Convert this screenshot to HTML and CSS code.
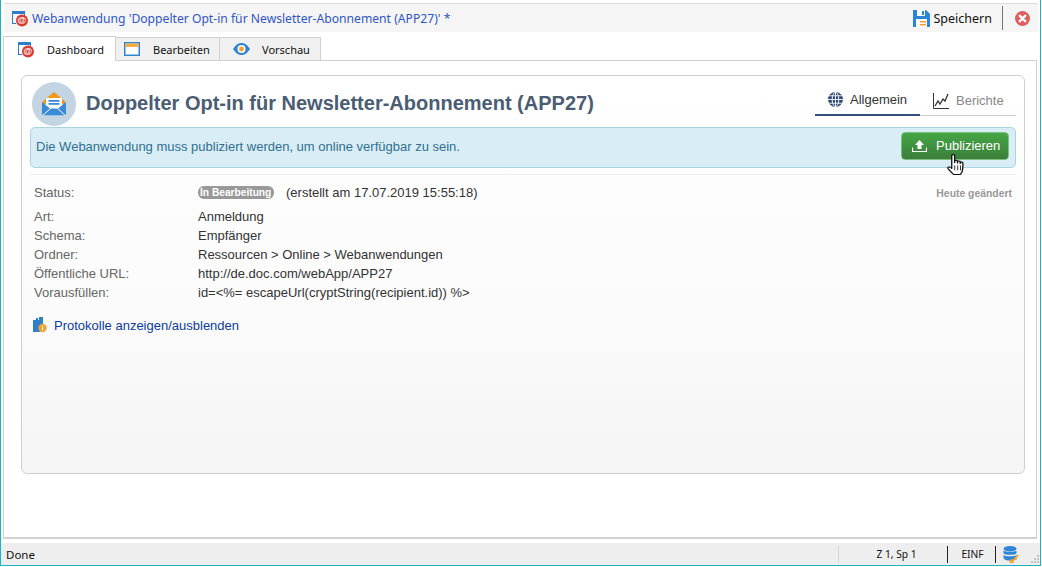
FILE: index.html
```html
<!DOCTYPE html>
<html lang="de">
<head>
<meta charset="utf-8">
<title>Webanwendung</title>
<link rel="stylesheet" href="styles.css">
</head>
<body>
<div class="app">
  <header class="titlebar">
    <svg class="ico-app" width="18" height="18" viewBox="0 0 18 18"><path d="M1 2h13v5h-1V5H2v9h3v1H1z" fill="#2f7fc8"/><rect x="1" y="2" width="13" height="2.6" fill="#2f7fc8"/><circle cx="11" cy="11.5" r="6" fill="#d93a32"/><text x="11" y="14.4" class="at">@</text></svg>
    <span class="title">Webanwendung 'Doppelter Opt-in für Newsletter-Abonnement (APP27)' *</span>
    <span class="grow"></span>
    <svg class="ico-save" width="17" height="17" viewBox="0 0 17 17"><path d="M0 0h13l4 4v13H0z" fill="#2b86d8"/><rect x="4" y="0" width="8" height="6" fill="#fff"/><rect x="9" y="1" width="2" height="4" fill="#2b86d8"/><rect x="3" y="9" width="11" height="8" fill="#fff"/><rect x="7" y="11" width="6" height="1.5" fill="#f0a030"/><rect x="7" y="14" width="6" height="1.5" fill="#f0a030"/></svg>
    <span class="save-label">Speichern</span>
    <span class="vsep"></span>
    <svg class="ico-close" width="15" height="15" viewBox="0 0 15 15"><circle cx="7.5" cy="7.5" r="7.5" fill="#de5f5f"/><path d="M4.8 4.8l5.4 5.4M10.2 4.8l-5.4 5.4" stroke="#fff" stroke-width="2.4" stroke-linecap="round"/></svg>
  </header>

  <nav class="tabs">
    <div class="tab tab-active">
      <svg width="18" height="18" viewBox="0 0 18 18"><path d="M1 2h13v5h-1V5H2v9h3v1H1z" fill="#2f7fc8"/><rect x="1" y="2" width="13" height="2.6" fill="#2f7fc8"/><circle cx="11" cy="11.5" r="6" fill="#d93a32"/><text x="11" y="14.4" class="at">@</text></svg>
      <span>Dashboard</span>
    </div>
    <div class="tab tab-edit">
      <svg width="16" height="14" viewBox="0 0 16 14"><rect x=".75" y=".75" width="14.5" height="12.5" fill="#fff" stroke="#2f86d0" stroke-width="1.5"/><rect x="1.5" y="1.5" width="13" height="3.4" fill="#f3ac3c"/></svg>
      <span>Bearbeiten</span>
    </div>
    <div class="tab tab-view">
      <svg width="17" height="12" viewBox="0 0 17 12"><path d="M0 6C3 1.500 5.500 0 8.500 0S14 1.500 17 6c-3 4.500-5.500 6-8.500 6S3 10.500 0 6z" fill="#2f86d0"/><circle cx="8.500" cy="6" r="4" fill="#fff"/><circle cx="8.500" cy="6" r="2.400" fill="#f0a030"/></svg>
      <span>Vorschau</span>
    </div>
  </nav>

  <main class="panel">
    <section class="card">
      <div class="head">
        <div class="avatar">
          <svg width="26" height="24" viewBox="0 0 26 24"><path d="M13 0L24 9v3H2V9z" fill="#f09a1a"/><rect x="5" y="6" width="16" height="10" fill="#fff"/><rect x="7.500" y="8" width="11" height="1.800" fill="#3a8ad6"/><rect x="7.500" y="11" width="11" height="1.800" fill="#3a8ad6"/><path d="M1 10l8 6.500h8L25 10v14H1z" fill="#3a8ad6"/><path d="M1 24l9-8h6l9 8z" fill="#3a8ad6" stroke="#fff" stroke-width="1"/></svg>
        </div>
        <h1>Doppelter Opt-in für Newsletter-Abonnement (APP27)</h1>
        <div class="views">
          <div class="view view-on">
            <svg width="15" height="15" viewBox="0 0 15 15"><circle cx="7.500" cy="7.500" r="7.500" fill="#2f4a70"/><g fill="none" stroke="#fff" stroke-width=".9"><ellipse cx="7.500" cy="7.500" rx="3.300" ry="7.200"/><path d="M7.500 0v15M0 7.500h15M1.300 3.800h12.400M1.300 11.200h12.400"/></g></svg>
            <span>Allgemein</span>
          </div>
          <div class="view view-off">
            <svg width="16" height="16" viewBox="0 0 16 16"><path d="M.5 0v15.500H16" fill="none" stroke="#333" stroke-width="1"/><path d="M2 13l3-5 2 3 3-5 2 2 3-7" fill="none" stroke="#333" stroke-width="1.300"/></svg>
            <span>Berichte</span>
          </div>
        </div>
      </div>

      <div class="banner">
        <span>Die Webanwendung muss publiziert werden, um online verfügbar zu sein.</span>
        <button class="publish" type="button">
          <svg width="15" height="12" viewBox="0 0 15 12"><path d="M7.500 0L12 5H9.500v4h-4V5H3z" fill="#fff"/><path d="M.5 7.500v4h14v-4" fill="none" stroke="#fff" stroke-width="1.200"/></svg>
          <span>Publizieren</span>
        </button>
      </div>

      <div class="details">
        <div class="changed">Heute geändert</div>
        <div class="status-row">
          <span class="label">Status:</span>
          <span class="status-val"><span class="badge">In Bearbeitung</span><span>(erstellt am 17.07.2019 15:55:18)</span></span>
        </div>
        <dl class="rows">
          <dt>Art:</dt><dd>Anmeldung</dd>
          <dt>Schema:</dt><dd>Empfänger</dd>
          <dt>Ordner:</dt><dd>Ressourcen &gt; Online &gt; Webanwendungen</dd>
          <dt>Öffentliche URL:</dt><dd>http://de.doc.com/webApp/APP27</dd>
          <dt>Vorausfüllen:</dt><dd>id=&lt;%= escapeUrl(cryptString(recipient.id)) %&gt;</dd>
        </dl>
        <div class="logs">
          <svg width="14" height="16" viewBox="0 0 14 16"><path d="M0 3h3V1h2v2h1V0h4v8a5 5 0 0 0-3 7H0z" fill="#2f7fc8"/><circle cx="9.500" cy="11" r="4.200" fill="#f0a030"/><rect x="9" y="8.500" width="1.100" height="1.200" fill="#fff"/><rect x="9" y="10.300" width="1.100" height="3" fill="#fff"/></svg>
          <a href="#">Protokolle anzeigen/ausblenden</a>
        </div>
      </div>
    </section>
  </main>

  <footer class="statusbar">
    <span class="done">Done</span>
    <span class="grow"></span>
    <span class="cell cell-pos">Z 1, Sp 1</span>
    <span class="cell cell-ins">EINF</span>
    <span class="cell cell-db">
      <svg width="16" height="17" viewBox="0 0 16 17"><ellipse cx="7" cy="2.800" rx="6.500" ry="2.800" fill="#2f86d8"/><path d="M.5 4.500c1 1.800 12 1.800 13 0v3c-1 1.800-12 1.800-13 0zM.5 9c1 1.800 12 1.800 13 0v3c-1 2-3 2.500-6.500 2.500S1.500 14 .5 12z" fill="#2f86d8"/><path d="M15 9l-5 5.500M9.500 14.500a1.300 1.300 0 1 0 .1.100M12 12l1.500 1.500" fill="none" stroke="#f0a030" stroke-width="1.800"/></svg>
    </span>
    <svg class="grip" width="9" height="9" viewBox="0 0 9 9"><path d="M6 0h2v2H6zM3 3h2v2H3zM6 3h2v2H6zM0 6h2v2H0zM3 6h2v2H3zM6 6h2v2H6z" fill="#c4c4c4"/></svg>
  </footer>

  <svg class="cursor" width="19" height="22" viewBox="1 0 16 23" preserveAspectRatio="none"><path d="M5 1.500c0-1.300 2.400-1.300 2.400 0V9l.2-1.500c0-1.200 2.200-1.200 2.200 0V9.500l.2-1.300c0-1.100 2.100-1.100 2.100 0v1.800l.2-.8c.2-1 2.100-.9 2.100.2 0 3-.1 6-.4 8-.3 2-1.200 3.100-1.800 4.100H6.500c-1-1.500-3-3.500-4.700-6.300-.7-1.300.8-2.400 1.900-1.300L5 15z" fill="#fff" stroke="#111" stroke-width="1.100" stroke-linejoin="round"/><path d="M7.500 12v5M10 12v5M12.400 12v5" stroke="#111" stroke-width=".8"/></svg>
</div>
</body>
</html>
```
FILE: styles.css
```css
* { box-sizing: border-box; }
html, body { margin: 0; padding: 0; background: #fff; }
body { width: 1042px; height: 567px; overflow: hidden; font-family: "Liberation Sans", Arial, sans-serif; font-size: 13px; color: #333; }
.app { position: relative; width: 1041px; height: 566px; border-left: 1px solid #19b5c4; border-right: 1px solid #19b5c4; border-bottom: 1px solid #19b5c4; padding-top: 3px; display: flex; flex-direction: column; }
.grow { flex: 1; }

.titlebar { height: 29px; margin: 0 2px 0 3px; border-top: 1px solid #dcdcdc; background: #f5f5f5; display: flex; align-items: center; padding-left: 7px; flex: none; }
.title { font-family: "Noto Sans", sans-serif; font-size: 12.15px; color: #2f55c8; margin-left: 3px; white-space: nowrap; }
.at { font-family: "Liberation Sans", sans-serif; font-size: 9px; font-weight: bold; fill: #fff; text-anchor: middle; }
.ico-save { margin-right: 4px; }
.save-label { font-family: "Noto Sans", sans-serif; font-size: 12.5px; color: #111; margin-right: 10px; }
.vsep { width: 1px; height: 24px; background: #777; margin-right: 12px; }
.ico-close { margin-right: 8px; }

.tabs { height: 28px; flex: none; padding: 3px 0 0 2px; display: flex; align-items: flex-end; font-family: "Noto Sans", sans-serif; font-size: 11px; color: #111; }
.tab { height: 23px; display: flex; align-items: center; background: #f0f0f0; border: 1px solid #d2d2d2; border-bottom: 0; border-left: 0; }
.tab-active { height: 25px; width: 113px; background: #fff; border-left: 1px solid #d2d2d2; padding-left: 13px; margin-bottom: -1px; position: relative; z-index: 1; }
.tab-active span { margin-left: 12px; }
.tab-edit { width: 104px; padding-left: 8px; }
.tab-edit span { margin-left: 13px; }
.tab-view { width: 101px; padding-left: 13px; }
.tab-view span { margin-left: 12px; }

.panel { flex: 1; margin: 0 3px 0 2px; border: 1px solid #d2d2d2; border-bottom-width: 2px; padding: 14px 11px 63px 17px; min-height: 0; display: flex; }
.card { flex: 1; border: 1px solid #cfcfcf; border-radius: 6px; background: linear-gradient(#fff 0, #fbfbfb 60%, #f5f5f5 100%); padding: 6px 8px 0 8px; }

.head { height: 44px; display: flex; align-items: flex-start; padding-left: 2px; }
.avatar { width: 44px; height: 44px; border-radius: 50%; background: #c3d5e2; display: flex; align-items: center; justify-content: center; flex: none; }
h1 { margin: 9px 0 0 10px; font-size: 20px; line-height: 24px; font-weight: bold; color: #4a5d73; white-space: nowrap; flex: 1; }
.views { display: flex; width: 201px; height: 34px; border-bottom: 1px solid #ccc; font-size: 13px; flex: none; }
.view { display: flex; align-items: center; height: 34px; padding-top: 3px; }
.view span { margin-left: 7px; }
.view-on { width: 105px; padding-left: 13px; border-bottom: 2px solid #34507a; color: #333; }
.view-off { padding-left: 13px; color: #888; }

.banner { height: 41px; margin-top: 1px; background: #d9edf7; border: 1px solid #a9d5e3; border-radius: 5px; display: flex; align-items: center; justify-content: space-between; padding: 0 6px 2px 5px; color: #31708f; }
.publish { width: 108px; height: 28px; margin-bottom: 2px; border: 1px solid #7cc07c; border-radius: 4px; background: linear-gradient(#44a744, #3b7e3b); color: #fff; font: 13px "Liberation Sans", Arial, sans-serif; display: flex; align-items: center; padding: 0 0 0 10px; }
.publish span { margin-left: 9px; }

.details { margin-top: 6px; border-top: 1px solid #ececec; padding: 0 4px; position: relative; }
.changed { position: absolute; right: 4px; top: 13px; font-size: 10.4px; font-weight: bold; color: #999; }
.status-row { display: grid; grid-template-columns: 164px 1fr; height: 24px; align-items: center; margin-top: 5px; }
.status-val { display: flex; align-items: center; }
.label, dt { color: #666; }
.badge { background: #999; color: #fff; font-size: 10.2px; font-weight: bold; border-radius: 6px; height: 13px; line-height: 13px; padding: 0 2px; width: 76px; white-space: nowrap; margin-right: 12px; }
.rows { display: grid; grid-template-columns: 164px 1fr; grid-auto-rows: 19px; align-items: center; margin: 3px 0 0 0; }
dd { margin: 0; color: #333; }
.logs { display: flex; align-items: center; margin-top: 15px; margin-left: -1px; }
.logs a { color: #0b3d9c; text-decoration: none; margin-left: 7px; }

.statusbar { height: 22px; flex: none; margin-top: 4px; background: #eeeeee; display: flex; align-items: center; position: relative; font-family: "Noto Sans", sans-serif; font-size: 11.500px; color: #111; padding-left: 5px; }
.cell { height: 17px; display: flex; align-items: center; justify-content: center; font-size: 10.2px; }
.cell-pos { width: 110px; border-left: 1px solid #d5d5d5; border-right: 1px solid #222; padding-left: 7px; }
.cell-ins { width: 48px; border-right: 1px solid #222; padding-left: 2px; }
.cell-db { width: 31px; justify-content: flex-start; padding-left: 7px; }
.grip { margin: 0 0 1px 4px; align-self: flex-end; }
.cursor { position: absolute; left: 946px; top: 154px; }
```
